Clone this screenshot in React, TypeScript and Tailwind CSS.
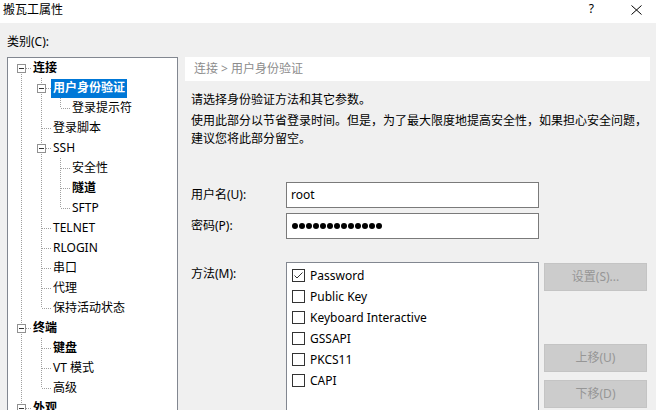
import React from "react";

type TNode = {
  label: string;
  bold?: boolean;
  selected?: boolean;
  expander?: boolean;
  cont?: boolean;
  children?: TNode[];
};

const tree: TNode[] = [
  {
    label: "连接",
    bold: true,
    expander: true,
    children: [
      { label: "用户身份验证", bold: true, selected: true, expander: true, children: [{ label: "登录提示符" }] },
      { label: "登录脚本" },
      {
        label: "SSH",
        expander: true,
        children: [{ label: "安全性" }, { label: "隧道", bold: true }, { label: "SFTP" }],
      },
      { label: "TELNET" },
      { label: "RLOGIN" },
      { label: "串口" },
      { label: "代理" },
      { label: "保持活动状态" },
    ],
  },
  {
    label: "终端",
    bold: true,
    expander: true,
    children: [{ label: "键盘", bold: true }, { label: "VT 模式" }, { label: "高级" }],
  },
  { label: "外观", bold: true, expander: true, cont: true },
];

const CX = [13, 33, 52];
const LINE = "#a0a0a0";

function renderRows(nodes: TNode[], level: number, anc: boolean[]): React.ReactNode[] {
  const out: React.ReactNode[] = [];
  nodes.forEach((n, i) => {
    const last = i === nodes.length - 1 && !n.cont;
    const hasAbove = !(level === 0 && i === 0);
    const cx = CX[level];
    const w = cx + 10;
    out.push(
      <div key={`${level}-${n.label}`} className="flex h-[20px] items-center">
        <svg width={w} height={20} className="shrink-0" shapeRendering="crispEdges">
          {anc.map((c, k) =>
            c ? (
              <line key={k} x1={CX[k] + 0.5} y1={0} x2={CX[k] + 0.5} y2={20} stroke={LINE} strokeDasharray="1 1" />
            ) : null
          )}
          {hasAbove && (
            <line x1={cx + 0.5} y1={0} x2={cx + 0.5} y2={10} stroke={LINE} strokeDasharray="1 1" />
          )}
          {!last && (
            <line x1={cx + 0.5} y1={10} x2={cx + 0.5} y2={20} stroke={LINE} strokeDasharray="1 1" />
          )}
          <line x1={cx + 1} y1={10.5} x2={cx + 10} y2={10.5} stroke={LINE} strokeDasharray="1 1" />
          {n.expander && (
            <g>
              <rect x={cx - 4 + 0.5} y={6.5} width={8} height={8} fill="#ffffff" stroke="#919191" />
              <line x1={cx - 2} y1={10.5} x2={cx + 3} y2={10.5} stroke="#333333" />
            </g>
          )}
        </svg>
        <span
          className={
            n.selected
              ? "h-[19px] flex items-center px-[2px] bg-[#0078d7] text-white font-bold whitespace-nowrap"
              : `h-[19px] flex items-center px-[2px] whitespace-nowrap text-black ${n.bold ? "font-bold" : ""}`
          }
        >
          {n.label}
        </span>
      </div>
    );
    if (n.children && n.children.length) {
      out.push(...renderRows(n.children, level + 1, [...anc, !last]));
    }
  });
  return out;
}

function Checkbox({ checked }: { checked?: boolean }) {
  return (
    <div className="w-[13px] h-[13px] border border-[#333333] bg-white shrink-0 flex items-center justify-center">
      {checked && (
        <svg width="11" height="11" viewBox="0 0 11 11">
          <path d="M1.5 5.5 L4 8 L9.5 2.5" fill="none" stroke="#333333" strokeWidth="1" />
        </svg>
      )}
    </div>
  );
}

function Btn({ label, className }: { label: string; className?: string }) {
  return (
    <div
      className={`h-[28px] w-[103px] shrink-0 bg-[#cccccc] border border-[#c4c4c4] text-[#969696] flex items-center justify-center ${className ?? ""}`}
    >
      {label}
    </div>
  );
}

export default function App() {
  const methods = [
    { label: "Password", checked: true },
    { label: "Public Key" },
    { label: "Keyboard Interactive" },
    { label: "GSSAPI" },
    { label: "PKCS11" },
    { label: "CAPI" },
  ];
  return (
    <div className="w-[656px] h-[410px] overflow-hidden bg-[#f0f0f0] flex flex-col text-[12px] leading-[18px] text-black font-['Noto_Sans','Noto_Sans_CJK_SC',sans-serif]">
      {/* Title bar */}
      <div className="h-[23px] bg-white flex items-start shrink-0">
        <span className="pl-[3px] pt-[1px]">搬瓦工属性</span>
        <span className="ml-auto">?</span>
        <svg width="11" height="10" viewBox="0 0 11 10" className="ml-[37px] mr-[14px] mt-[5px]">
          <path d="M0.5 0.5 L10.5 9.5 M10.5 0.5 L0.5 9.5" stroke="#000" strokeWidth="1" fill="none" />
        </svg>
      </div>

      <div className="flex flex-col px-[7px] flex-1 min-h-0">
        <div className="pt-[10px] h-[34px] shrink-0">类别(C):</div>
        <div className="flex flex-1 min-h-0">
          {/* Tree */}
          <div className="w-[171px] h-[380px] shrink-0 border border-[#828790] bg-white">
            <div className="flex flex-col">{renderRows(tree, 0, [])}</div>
          </div>

          {/* Right panel */}
          <div className="ml-[7px] w-[465px] shrink-0 flex flex-col">
            <div className="h-[24px] bg-white flex items-center pl-[9px] text-[#8c8c8c] shrink-0">
              连接 &gt; 用户身份验证
            </div>
            <div className="pl-[6px] flex flex-col">
              <p className="mt-[10px]">请选择身份验证方法和其它参数。</p>
              <p className="mt-[3px] whitespace-nowrap">
                使用此部分以节省登录时间。但是，为了最大限度地提高安全性，如果担心安全问题，
                <br />
                建议您将此部分留空。
              </p>

              <div className="mt-[34px] flex items-center h-[26px]">
                <span className="w-[95px] shrink-0">用户名(U):</span>
                <div className="w-[253px] shrink-0 h-[26px] border border-[#7a7a7a] bg-white flex items-center pl-[4px]">
                  root
                </div>
              </div>
              <div className="mt-[5px] flex items-center h-[26px]">
                <span className="w-[95px] shrink-0">密码(P):</span>
                <div className="w-[253px] shrink-0 h-[26px] border border-[#7a7a7a] bg-white flex items-center pl-[5px] gap-[1px]">
                  {Array.from({ length: 13 }).map((_, i) => (
                    <span key={i} className="w-[6px] h-[6px] rounded-full bg-black" />
                  ))}
                </div>
              </div>

              <div className="mt-[23px] flex">
                <span className="w-[95px] shrink-0 pt-[3px]">方法(M):</span>
                <div className="w-[253px] shrink-0 h-[160px] border border-[#828790] bg-white pt-[2px] flex flex-col">
                  {methods.map((m) => (
                    <div key={m.label} className="h-[21px] flex items-center pl-[5px] gap-[5px] whitespace-nowrap">
                      <Checkbox checked={m.checked} />
                      <span>{m.label}</span>
                    </div>
                  ))}
                </div>
                <div className="ml-[5px] flex flex-col shrink-0">
                  <Btn label="设置(S)..." className="mt-[1px]" />
                  <Btn label="上移(U)" className="mt-[53px]" />
                  <Btn label="下移(D)" className="mt-[8px]" />
                </div>
              </div>
            </div>
          </div>
        </div>
      </div>
    </div>
  );
}
